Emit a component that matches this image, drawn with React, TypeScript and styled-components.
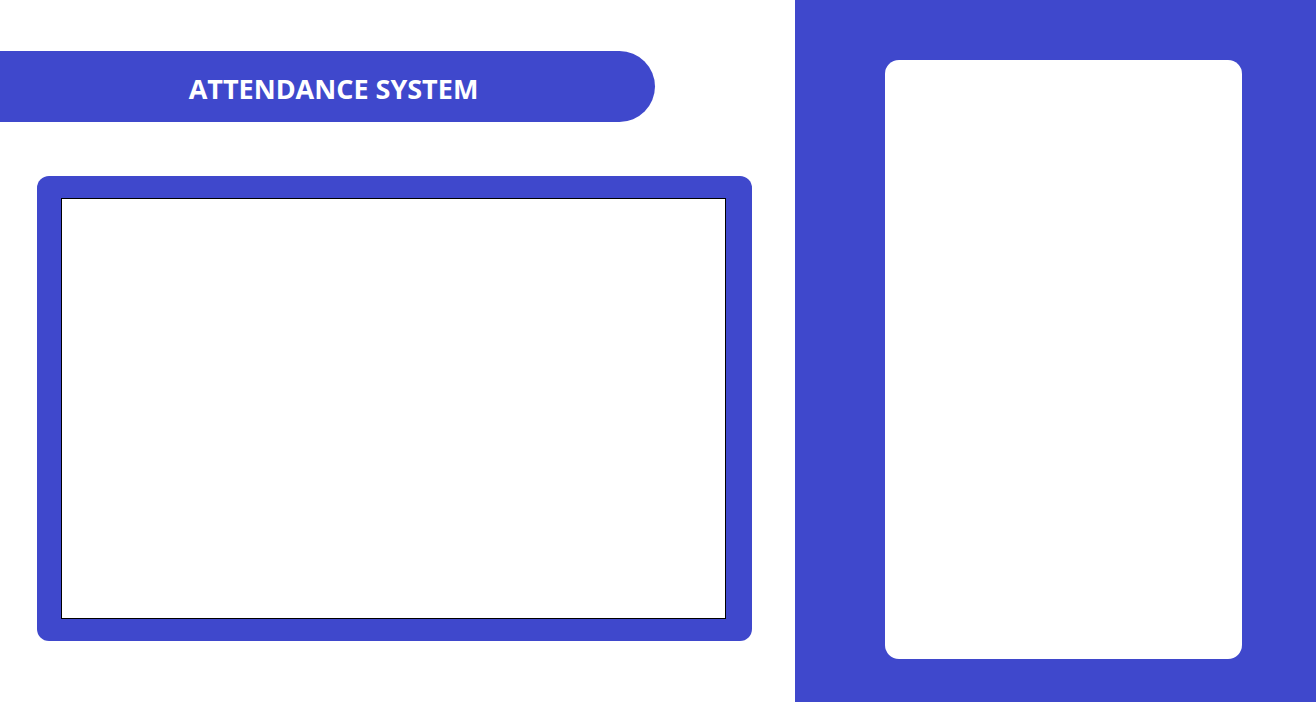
import React from "react";
import styled, { createGlobalStyle } from "styled-components";

const brand = "#3f48cc";

const GlobalStyle = createGlobalStyle`
  html, body {
    margin: 0;
    padding: 0;
    background: #ffffff;
    font-family: "Open Sans", "Liberation Sans", sans-serif;
  }
`;

const Page = styled.div`
  display: flex;
  width: 1316px;
  height: 702px;
  overflow: hidden;
`;

const MainColumn = styled.div`
  width: 795px;
  display: flex;
  flex-direction: column;
`;

const TitleBar = styled.div`
  margin-top: 51px;
  width: 655px;
  height: 71px;
  box-sizing: border-box;
  padding: 4px 0 0 12px;
  background: ${brand};
  border-radius: 0 36px 36px 0;
  display: flex;
  align-items: center;
  justify-content: center;
`;

const Title = styled.h1`
  margin: 0;
  color: #ffffff;
  font-size: 27px;
  font-weight: 700;
  letter-spacing: 0;
`;

const CameraFrame = styled.div`
  margin: 54px 0 0 37px;
  width: 715px;
  height: 465px;
  box-sizing: border-box;
  padding: 22px 26px 22px 24px;
  background: ${brand};
  border-radius: 12px;
  display: flex;
`;

const CameraView = styled.div`
  flex: 1;
  background: #ffffff;
  border: 1px solid #000000;
`;

const SidePanel = styled.aside`
  width: 521px;
  height: 702px;
  box-sizing: border-box;
  padding: 60px 74px 43px 90px;
  background: ${brand};
  display: flex;
`;

const InfoCard = styled.div`
  flex: 1;
  background: #ffffff;
  border-radius: 14px;
`;

export default function App() {
  return (
    <>
      <GlobalStyle />
      <Page>
        <MainColumn>
          <TitleBar>
            <Title>ATTENDANCE SYSTEM</Title>
          </TitleBar>
          <CameraFrame>
            <CameraView />
          </CameraFrame>
        </MainColumn>
        <SidePanel>
          <InfoCard />
        </SidePanel>
      </Page>
    </>
  );
}
